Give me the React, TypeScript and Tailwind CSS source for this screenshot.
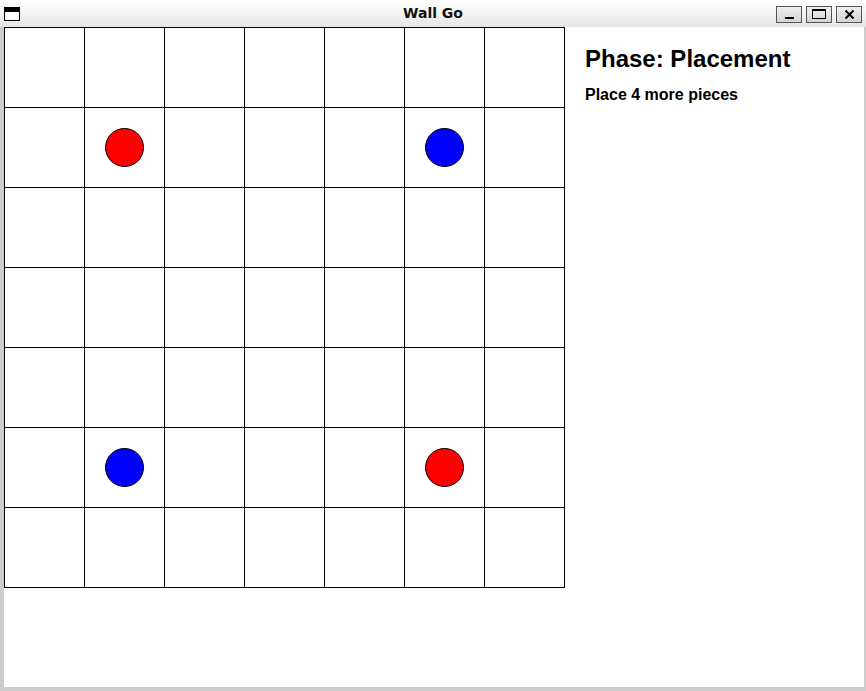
const ROWS = 7;
const COLS = 7;

// pieces placed so far: [row, col, colour]
const pieces: [number, number, string][] = [
  [1, 1, "bg-[#ff0000]"],
  [1, 5, "bg-[#0000ff]"],
  [5, 1, "bg-[#0000ff]"],
  [5, 5, "bg-[#ff0000]"],
];

function pieceAt(r: number, c: number) {
  const p = pieces.find(([pr, pc]) => pr === r && pc === c);
  return p ? p[2] : null;
}

function WinButton({ children }: { children: React.ReactNode }) {
  return (
    <div className="w-[26px] h-[17px] border border-[#555] bg-gradient-to-b from-[#f0f0f0] to-[#d4d4d4] flex items-center justify-center">
      {children}
    </div>
  );
}

export default function App() {
  return (
    <div className="w-[866px] h-[691px] bg-[#cccccc] flex flex-col overflow-hidden">

      {/* Title bar */}
      <div className="h-[27px] flex-shrink-0 grid grid-cols-[1fr_auto_1fr] items-center bg-gradient-to-b from-white to-[#e6e6e6]">
        <div className="ml-[4px] mt-[1px] w-[16px] h-[14px] border border-black bg-white flex flex-col">
          <div className="h-[4px] bg-black" />
        </div>
        <div className="text-[14px] font-bold text-[#111] font-['DejaVu_Sans',sans-serif]">
          Wall Go
        </div>
        <div className="flex justify-end gap-[4px] mr-[4px] mt-[1px]">
          <WinButton>
            <div className="w-[9px] h-[2px] bg-black mt-[8px]" />
          </WinButton>
          <WinButton>
            <div className="w-[14px] h-[10px] border border-black border-t-[2px]" />
          </WinButton>
          <WinButton>
            <svg width="11" height="11" viewBox="0 0 11 11">
              <path d="M1.5 1.5 L9.5 9.5 M9.5 1.5 L1.5 9.5" stroke="black" strokeWidth="2" />
            </svg>
          </WinButton>
        </div>
      </div>

      {/* Client area */}
      <div className="flex-1 ml-[4px] mr-[2px] mb-[4px] bg-white flex items-start">
        <div className="border-l border-t border-black grid grid-cols-[repeat(7,80px)]">
          {Array.from({ length: ROWS * COLS }).map((_, i) => {
            const r = Math.floor(i / COLS);
            const c = i % COLS;
            const col = pieceAt(r, c);
            return (
              <div key={i} className="w-[80px] h-[80px] border-r border-b border-black flex items-center justify-center">
                {col && <div className={`w-[39px] h-[39px] rounded-full border border-black ${col}`} />}
              </div>
            );
          })}
        </div>

        <div className="pl-[20px] pt-[17px] font-['Liberation_Sans',Arial,sans-serif] text-black">
          <div className="text-[24px] font-bold leading-[30px]">Phase: Placement</div>
          <div className="text-[16px] font-bold mt-[11px] leading-[20px]">Place 4 more pieces</div>
        </div>
      </div>
    </div>
  );
}
